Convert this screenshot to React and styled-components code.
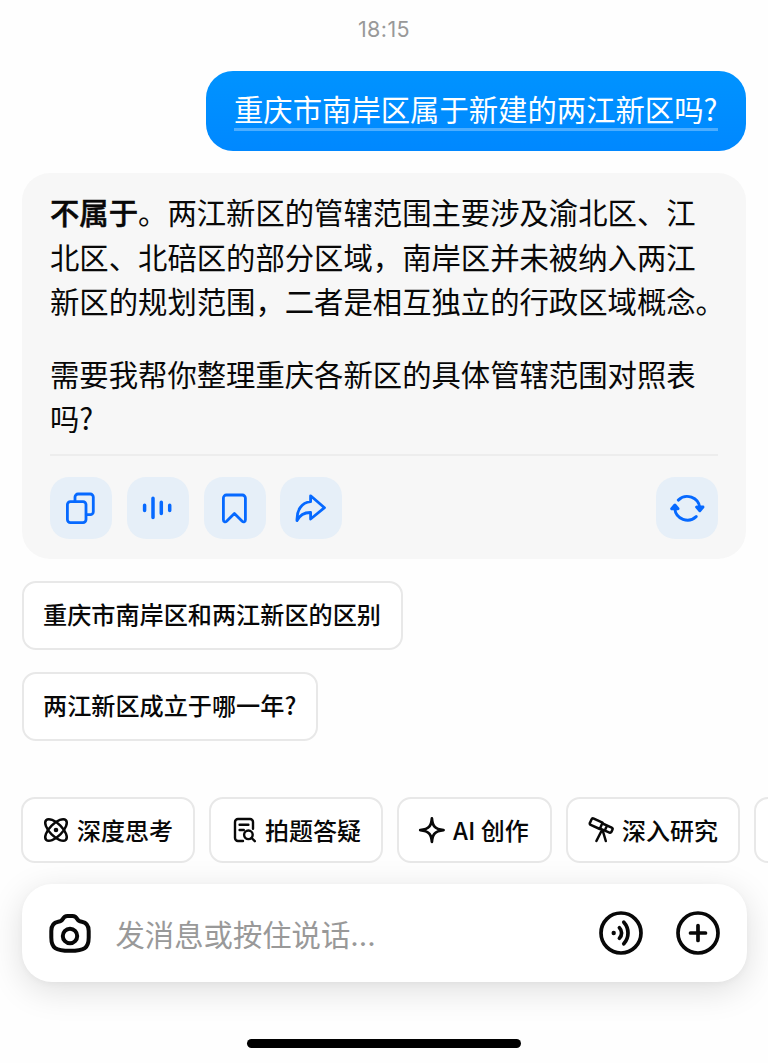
import styled, { createGlobalStyle } from 'styled-components';

const GlobalStyle = createGlobalStyle`
  * {
    box-sizing: border-box;
  }
  body {
    margin: 0;
    background: #fff;
    overflow: hidden;
  }
  button {
    font: inherit;
    color: inherit;
    padding: 0;
    margin: 0;
    border: none;
    background: none;
  }
  svg {
    display: block;
    flex: none;
    overflow: visible;
  }
`;

const Screen = styled.div`
  width: 768px;
  height: 1063px;
  display: flex;
  flex-direction: column;
  overflow: hidden;
  background: #fefefe;
  color: #080808;
  font-family: Inter, 'Noto Sans CJK SC', sans-serif;
`;

const Time = styled.div`
  height: 71px;
  padding-top: 17px;
  line-height: 24px;
  font-size: 21.5px;
  letter-spacing: 0.4px;
  text-align: center;
  color: #999;
`;

const Messages = styled.div`
  display: flex;
  flex-direction: column;
  align-items: flex-start;
  gap: 22px;
  padding: 0 22px;
`;

const Question = styled.div`
  align-self: flex-end;
  height: 80px;
  padding: 16px 28px 0;
  border-radius: 27px;
  background: linear-gradient(#0093ff, #0088ff);
  color: #fff;
`;

const QuestionText = styled.div`
  height: 44px;
  width: 484px;
  border-bottom: 3px solid #4dadff;
  font-family: 'Noto Sans CJK SC', sans-serif;
  font-size: 29.35px;
  line-height: 43px;
  white-space: nowrap;
`;

const Answer = styled.div`
  width: 724px;
  height: 386px;
  padding: 16px 28px 0;
  border-radius: 28px;
  background: #f7f7f7;
`;

const Paragraph = styled.p`
  margin: 0 0 28px;
  font-family: 'Noto Sans CJK SC', sans-serif;
  font-size: 29.35px;
  line-height: 44.5px;
  white-space: nowrap;

  b {
    font-weight: 500;
    -webkit-text-stroke: 0.5px #080808;
  }
`;

const Actions = styled.div`
  display: flex;
  gap: 14.8px;
  margin-top: -13.5px;
  padding-top: 20.5px;
  border-top: 2px solid #ededed;
`;

const ActionButton = styled.button`
  width: 62px;
  height: 62px;
  display: flex;
  justify-content: center;
  align-items: center;
  border-radius: 19px;
  background: #e6eff8;
  color: #0669ff;
  margin-left: ${props => (props.$last ? 'auto' : '0')};
`;

const Suggestion = styled.button`
  height: 69px;
  padding: 0 20px 4px 19px;
  border: 2px solid #e8e8e8;
  border-radius: 14px;
  background: #fff;
  font-family: 'Noto Sans CJK SC', sans-serif;
  font-size: 24.15px;
  font-weight: 500;
  line-height: 61px;
  white-space: nowrap;
`;

const Tools = styled.div`
  display: flex;
  gap: 14px;
  margin-top: 56px;
  padding-left: 21px;
`;

const Tool = styled.button`
  flex: none;
  width: ${props => props.$width}px;
  height: 66px;
  display: flex;
  align-items: center;
  gap: 9px;
  padding-left: 21px;
  border: 2px solid #e8e8e8;
  border-radius: 14px;
  background: #fff;
  font-family: 'Noto Sans CJK SC', sans-serif;
  font-size: 24px;
  font-weight: 500;
  white-space: nowrap;
`;

const ToolLabel = styled.span`
  height: 36px;
  line-height: 36px;
  margin-bottom: 1px;
`;

const InputBar = styled.div`
  width: 725px;
  height: 97.5px;
  margin: 21px 0 0 21.5px;
  display: flex;
  align-items: center;
  padding: 0 27px;
  border-radius: 30px;
  background: #fff;
  box-shadow: 0 8px 34px rgba(0, 0, 0, 0.13), 0 2px 6px rgba(0, 0, 0, 0.03);
`;

const Placeholder = styled.div`
  flex: 1;
  margin-left: 25px;
  padding-top: 4px;
  font-family: 'Noto Sans CJK SC', sans-serif;
  font-size: 29.35px;
  line-height: 44px;
  color: #999;

  span {
    font-family: Inter, sans-serif;
  }
`;

const RoundIcons = styled.div`
  display: flex;
  gap: 33px;
`;

const HomeIndicator = styled.div`
  width: 274px;
  height: 9px;
  margin: 57.5px auto 0;
  border-radius: 5px;
  background: #000;
`;

const Icon = ({ size = 32, height, stroke = 2.8, children }) => (
  <svg
    width={size}
    height={height || size}
    viewBox={`0 0 ${size} ${height || size}`}
    fill="none"
    stroke="currentColor"
    strokeWidth={stroke}
    strokeLinecap="round"
    strokeLinejoin="round"
  >
    {children}
  </svg>
);

const CopyIcon = () => (
  <Icon>
    <rect x="2.4" y="9.6" width="18.6" height="21" rx="3" />
    <path d="M10 9.4V5a3 3 0 0 1 3-3h12.3a3 3 0 0 1 3 3v14.7a3 3 0 0 1-3 3h-4" />
  </Icon>
);

const WaveIcon = () => (
  <Icon stroke={3.5}>
    <path d="M2.6 13.2v5.4M11 6.2v19.2M19.3 10.2v11.4M27.7 13.2v5.4" />
  </Icon>
);

const BookmarkIcon = () => (
  <Icon>
    <path d="M4.4 6a3 3 0 0 1 3-3h16a3 3 0 0 1 3 3v21.8c0 2-1.8 2.7-3.2 1.4L15.4 21.6l-7.8 7.6c-1.4 1.3-3.2.6-3.2-1.4z" />
  </Icon>
);

const ShareIcon = () => (
  <Icon>
    <path d="M15.6 3.8 29.5 15.7 15.6 27v-6.5C9.5 20.4 4.9 22.8 2 28.6 1.6 18.3 6.4 10.5 15.6 9.7z" />
  </Icon>
);

const RefreshIcon = () => (
  <Icon stroke={2.9}>
    <path d="M7.3 8.1A12.7 12.7 0 0 1 28.8 15.6M25.2 24.6A12.7 12.7 0 0 1 3.8 16.6" />
    <path d="M25.6 15h6.4L28.8 18.8z" fill="currentColor" />
    <path d="M.7 16.8h6.4L3.9 13z" fill="currentColor" />
  </Icon>
);

const AtomIcon = () => (
  <Icon size={24} stroke={2.5}>
    <ellipse cx="12" cy="12" rx="13.9" ry="6.2" transform="rotate(45 12 12)" />
    <ellipse cx="12" cy="12" rx="13.9" ry="6.2" transform="rotate(-45 12 12)" />
    <circle cx="12" cy="12" r="2.3" fill="currentColor" stroke="none" />
  </Icon>
);

const DocSearchIcon = () => (
  <Icon size={24} stroke={2.4}>
    <path d="M11 23H6a3 3 0 0 1-3-3V4a3 3 0 0 1 3-3h12a3 3 0 0 1 3 3v6.8M7.6 6.7h8.8M7.6 12h4.2" />
    <circle cx="16.4" cy="16.8" r="4.3" />
    <path d="m19.6 20 3.2 3.2" />
  </Icon>
);

const SparkleIcon = () => (
  <Icon size={24} stroke={2.7}>
    <path d="M11.9.4C12.5 7 13.9 11.3 23.6 12.2 13.9 13.1 12.5 17.4 11.9 24 11.3 17.4 9.9 13.1.2 12.2 9.9 11.3 11.3 7 11.9.4z" />
  </Icon>
);

const TelescopeIcon = () => (
  <Icon size={24} stroke={2.5}>
    <g transform="translate(-0.8 -0.3)">
      <path d="M5.6.9 14.3 5 11.6 11.3 2.5 7.2C1.6 6.8 1.3 6 1.7 5.2L3.3 1.7C3.7.8 4.7.5 5.6.9z" />
      <path d="M14.3 5.800 23.5 9.900C24.3 10.300 24.600 11 24.300 11.700L23.200 14.200C22.800 14.900 22.100 15.200 21.300 14.900L12 10.900M18.600 8.300 16.700 12.600" />
      <path d="M13.500 12.800 8.200 23.300M14.500 12.800 17.600 23.300" />
    </g>
  </Icon>
);

const CameraIcon = () => (
  <Icon size={42} height={40} stroke={4}>
    <path d="M13.6 6.2C15 3.6 16.3 2.9 18.5 2.9h5c2.2 0 3.5.7 4.900 3.300C29.300 7.900 30.600 8.300 32.800 8.700 38 9.600 39.700 12.600 39.700 18v6.500C39.700 35 35.500 37.800 21 37.800S2.300 35 2.300 24.500V18c0-5.400 1.700-8.400 6.900-9.300 2.200-.4 3.500-.8 4.400-2.500z" />
    <circle cx="21" cy="23" r="7.2" />
  </Icon>
);

const VoiceIcon = () => (
  <Icon size={44} stroke={3.7}>
    <circle cx="22" cy="22" r="20" />
    <circle cx="14.7" cy="22" r="2.2" fill="currentColor" stroke="none" />
    <path d="M20.4 16.8a7.3 7.3 0 0 1 0 10.4M24.8 11.2a16 16 0 0 1 0 21.6" />
  </Icon>
);

const PlusIcon = () => (
  <Icon size={44} stroke={3.7}>
    <circle cx="22" cy="22" r="20" />
    <path d="M22 14.5v15M14.5 22h15" />
  </Icon>
);

const suggestions = ['重庆市南岸区和两江新区的区别', '两江新区成立于哪一年?'];

const tools = [
  { label: '深度思考', icon: <AtomIcon />, width: 174 },
  { label: '拍题答疑', icon: <DocSearchIcon />, width: 174 },
  { label: 'AI 创作', icon: <SparkleIcon />, width: 155 },
  { label: '深入研究', icon: <TelescopeIcon />, width: 174 },
  { label: '', icon: null, width: 155 },
];

function App() {
  return (
    <Screen>
      <GlobalStyle />
      <Time>18:15</Time>
      <Messages>
        <Question>
          <QuestionText>重庆市南岸区属于新建的两江新区吗?</QuestionText>
        </Question>
        <Answer>
          <Paragraph>
            <b>不属于</b>。两江新区的管辖范围主要涉及渝北区、江<br />
            北区、北碚区的部分区域，南岸区并未被纳入两江<br />
            新区的规划范围，二者是相互独立的行政区域概念。
          </Paragraph>
          <Paragraph>
            需要我帮你整理重庆各新区的具体管辖范围对照表<br />
            吗?
          </Paragraph>
          <Actions>
            <ActionButton><CopyIcon /></ActionButton>
            <ActionButton><WaveIcon /></ActionButton>
            <ActionButton><BookmarkIcon /></ActionButton>
            <ActionButton><ShareIcon /></ActionButton>
            <ActionButton $last><RefreshIcon /></ActionButton>
          </Actions>
        </Answer>
        {suggestions.map(text => (
          <Suggestion key={text}>{text}</Suggestion>
        ))}
      </Messages>
      <Tools>
        {tools.map((tool, index) => (
          <Tool key={index} $width={tool.width}>
            {tool.icon}
            <ToolLabel>{tool.label}</ToolLabel>
          </Tool>
        ))}
      </Tools>
      <InputBar>
        <CameraIcon />
        <Placeholder>发消息或按住说话<span>...</span></Placeholder>
        <RoundIcons>
          <VoiceIcon />
          <PlusIcon />
        </RoundIcons>
      </InputBar>
      <HomeIndicator />
    </Screen>
  );
}

export default App;
